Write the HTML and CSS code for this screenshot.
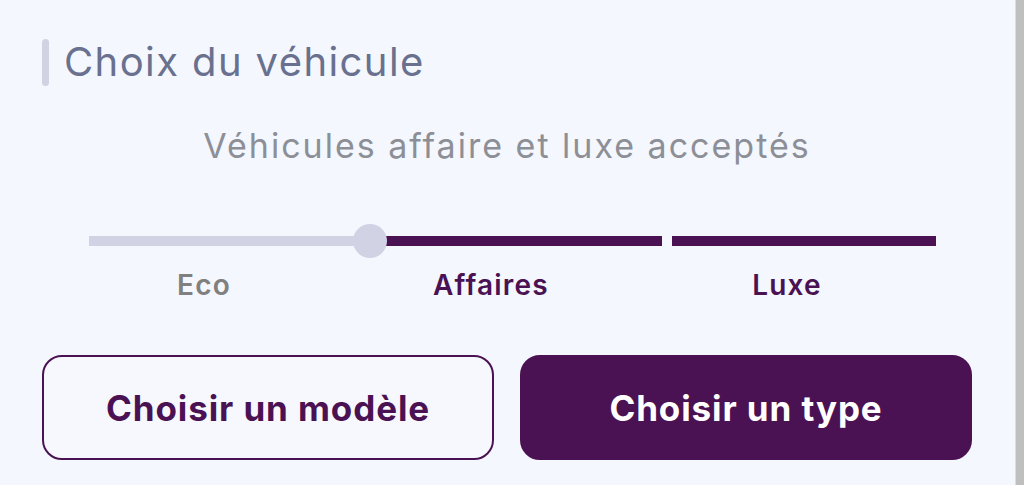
FILE: index.html
```html
<!DOCTYPE html>
<html lang="fr">
<head>
<meta charset="utf-8">
<link rel="stylesheet" href="styles.css">
</head>
<body>
<div class="page">
  <main class="panel">
    <h2 class="title"><span class="title-bar"></span><span class="title-text">Choix du véhicule</span></h2>
    <p class="subtitle">Véhicules affaire et luxe acceptés</p>
    <div class="slider">
      <div class="segment segment-main">
        <div class="track-off"></div>
        <div class="track-on"></div>
        <span class="knob"></span>
      </div>
      <div class="segment segment-last track-on"></div>
    </div>
    <div class="labels">
      <span class="label label-off">Eco</span>
      <span class="label">Affaires</span>
      <span class="label">Luxe</span>
    </div>
    <div class="actions">
      <button class="btn btn-outline">Choisir un modèle</button>
      <button class="btn btn-filled">Choisir un type</button>
    </div>
  </main>
  <div class="scrollbar"></div>
</div>
</body>
</html>
```

FILE: styles.css
```css
* { box-sizing: border-box; }
html, body { margin: 0; padding: 0; }
body {
  background: #f4f7fe;
  font-family: "Inter", "Liberation Sans", sans-serif;
  height: 485px;
  overflow: hidden;
}
.page {
  display: flex;
  height: 485px;
}
.panel {
  flex: 1;
  padding: 39px 43px 0 42px;
}
.scrollbar {
  width: 9px;
  border-left: 1px solid #dadce2;
  background: #bfbfbf;
}
.title {
  display: flex;
  align-items: center;
  gap: 15px;
  margin: 0;
  height: 47px;
  font-weight: 400;
}
.title-bar {
  width: 7px;
  height: 47px;
  border-radius: 4px;
  background: #d1d3e5;
}
.title-text {
  font-size: 40px;
  letter-spacing: 1.4px;
  color: #69718f;
  line-height: 47px;
  margin-top: -2px;
}
.subtitle {
  margin: 38px 0 0;
  text-align: center;
  font-size: 34px;
  line-height: 44px;
  letter-spacing: 2px;
  color: #8d8f97;
}
.slider {
  display: flex;
  gap: 10px;
  margin: 68px 36px 0 47px;
  height: 10px;
}
.segment-main {
  position: relative;
  display: flex;
  width: 573px;
}
.segment-last { flex: 1; }
.track-off {
  width: 281px;
  background: #d1d3e5;
}
.track-on {
  flex: 1;
  background: #4b1253;
}
.knob {
  position: absolute;
  left: 281px;
  top: 50%;
  width: 34px;
  height: 34px;
  border-radius: 50%;
  background: #d1d3e5;
  transform: translate(-50%, -50%);
}
.labels {
  display: grid;
  grid-template-columns: 230px 344px 248px;
  margin: 22px 0 0 47px;
}
.label {
  text-align: center;
  font-size: 28px;
  font-weight: 600;
  line-height: 34px;
  letter-spacing: 1.2px;
  color: #4b1253;
}
.label-off { color: #808080; }
.actions {
  display: flex;
  gap: 26px;
  margin-top: 53px;
}
.btn {
  flex: 1;
  height: 105px;
  border-radius: 20px;
  font-family: inherit;
  font-size: 35px;
  font-weight: 700;
  letter-spacing: 0.9px;
  cursor: pointer;
}
.btn-outline {
  background: #f7f8fe;
  border: 2px solid #4b1253;
  color: #4b1253;
}
.btn-filled {
  background: #4b1253;
  border: 2px solid #4b1253;
  color: #ffffff;
}
```
